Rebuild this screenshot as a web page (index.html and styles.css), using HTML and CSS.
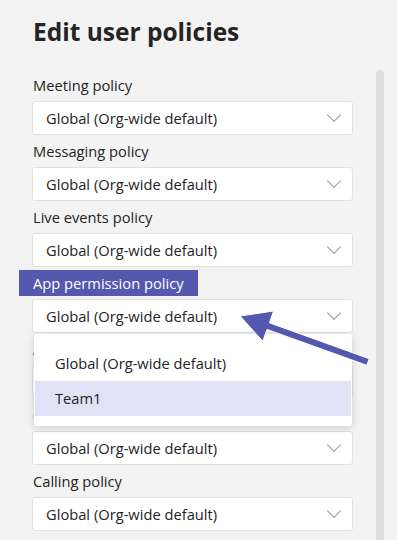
FILE: index.html
```html
<!DOCTYPE html>
<html lang="en">
<head>
    <meta charset="UTF-8">
    <meta name="viewport" content="width=device-width, initial-scale=1.0">
    <title>Edit user policies</title>
    <link rel="stylesheet" href="styles.css">
</head>
<body>
    <div class="layout">
        <div class="panel">
            <h1>Edit user policies</h1>

            <div class="field">
                <div class="label">Meeting policy</div>
                <div class="select">Global (Org-wide default)<span class="chevron"></span></div>
            </div>
            <div class="field">
                <div class="label">Messaging policy</div>
                <div class="select">Global (Org-wide default)<span class="chevron"></span></div>
            </div>
            <div class="field">
                <div class="label">Live events policy</div>
                <div class="select">Global (Org-wide default)<span class="chevron"></span></div>
            </div>
            <div class="field open">
                <div class="label"><span class="highlight">App permission policy</span></div>
                <div class="select">Global (Org-wide default)<span class="chevron"></span></div>
                <!-- dropdown list shown open -->
                <ul class="menu">
                    <li>Global (Org-wide default)</li>
                    <li class="active">Team1</li>
                </ul>
            </div>
            <div class="field">
                <div class="label">App setup policy</div>
                <div class="select">Global (Org-wide default)<span class="chevron"></span></div>
            </div>
            <div class="field">
                <div class="label">Call park policy</div>
                <div class="select">Global (Org-wide default)<span class="chevron"></span></div>
            </div>
            <div class="field">
                <div class="label">Calling policy</div>
                <div class="select">Global (Org-wide default)<span class="chevron"></span></div>
            </div>
        </div>
        <div class="scrollbar"></div>
    </div>

    <!-- callout arrow -->
    <svg class="callout" width="397" height="540" viewBox="0 0 397 540">
        <polygon points="240,316 273.6,311 269.4,322.8 369.2,358.7 366.8,365.3 267,329.4 262.8,341.2"
                 fill="#5558af" stroke="#ffffff" stroke-width="1" stroke-linejoin="round"/>
    </svg>
</body>
</html>
```

FILE: styles.css
```css
body {
    margin: 0;
    background-color: #f3f3f3;
    font-family: "Open Sans", "Noto Sans", sans-serif;
    color: #252424;
    position: relative;
    height: 540px;
    overflow: hidden;
}
.layout {
    display: flex;
}
.panel {
    width: 321px;
    padding-left: 32px;
}
h1 {
    font-size: 24.5px;
    line-height: 32px;
    font-weight: 700;
    margin: 16px 0 27px 1px;
}
.field {
    position: relative;
}
.label {
    font-size: 14.7px;
    line-height: 20px;
    margin: 6px 0 6px 1px;
}
.highlight {
    display: inline-block;
    background-color: #5558af;
    color: white;
    padding: 3px 14px;
    margin: -3px -14px;
}
.select {
    height: 32px;
    line-height: 32px;
    background: white;
    border: 1px solid #e1e1e1;
    border-radius: 3px;
    padding: 0 14px 0 13px;
    font-size: 14.7px;
    display: flex;
    justify-content: space-between;
    align-items: center;
}
.chevron {
    width: 9px;
    height: 9px;
    border-right: 1px solid #9a9a9a;
    border-bottom: 1px solid #9a9a9a;
    transform: rotate(45deg);
    margin: -6px -1px 0 0;
}
.menu {
    position: absolute;
    left: 2px;
    top: 61px;
    width: 318px;
    margin: 0;
    padding: 12px 0 10px;
    list-style: none;
    background: white;
    border-radius: 3px;
    box-shadow: 0 2px 8px rgba(0, 0, 0, 0.16);
    z-index: 2;
}
.menu li {
    height: 35px;
    line-height: 35px;
    padding-left: 20px;
    font-size: 14.7px;
    margin: 0 1px;
}
.menu li.active {
    background-color: #e2e2f6;
}
.scrollbar {
    width: 8px;
    height: 480px;
    margin: 70px 0 0 23px;
    background-color: #dedede;
    border-radius: 4px 4px 0 0;
}
.callout {
    position: absolute;
    left: 0;
    top: 0;
    pointer-events: none;
    z-index: 3;
}
```
